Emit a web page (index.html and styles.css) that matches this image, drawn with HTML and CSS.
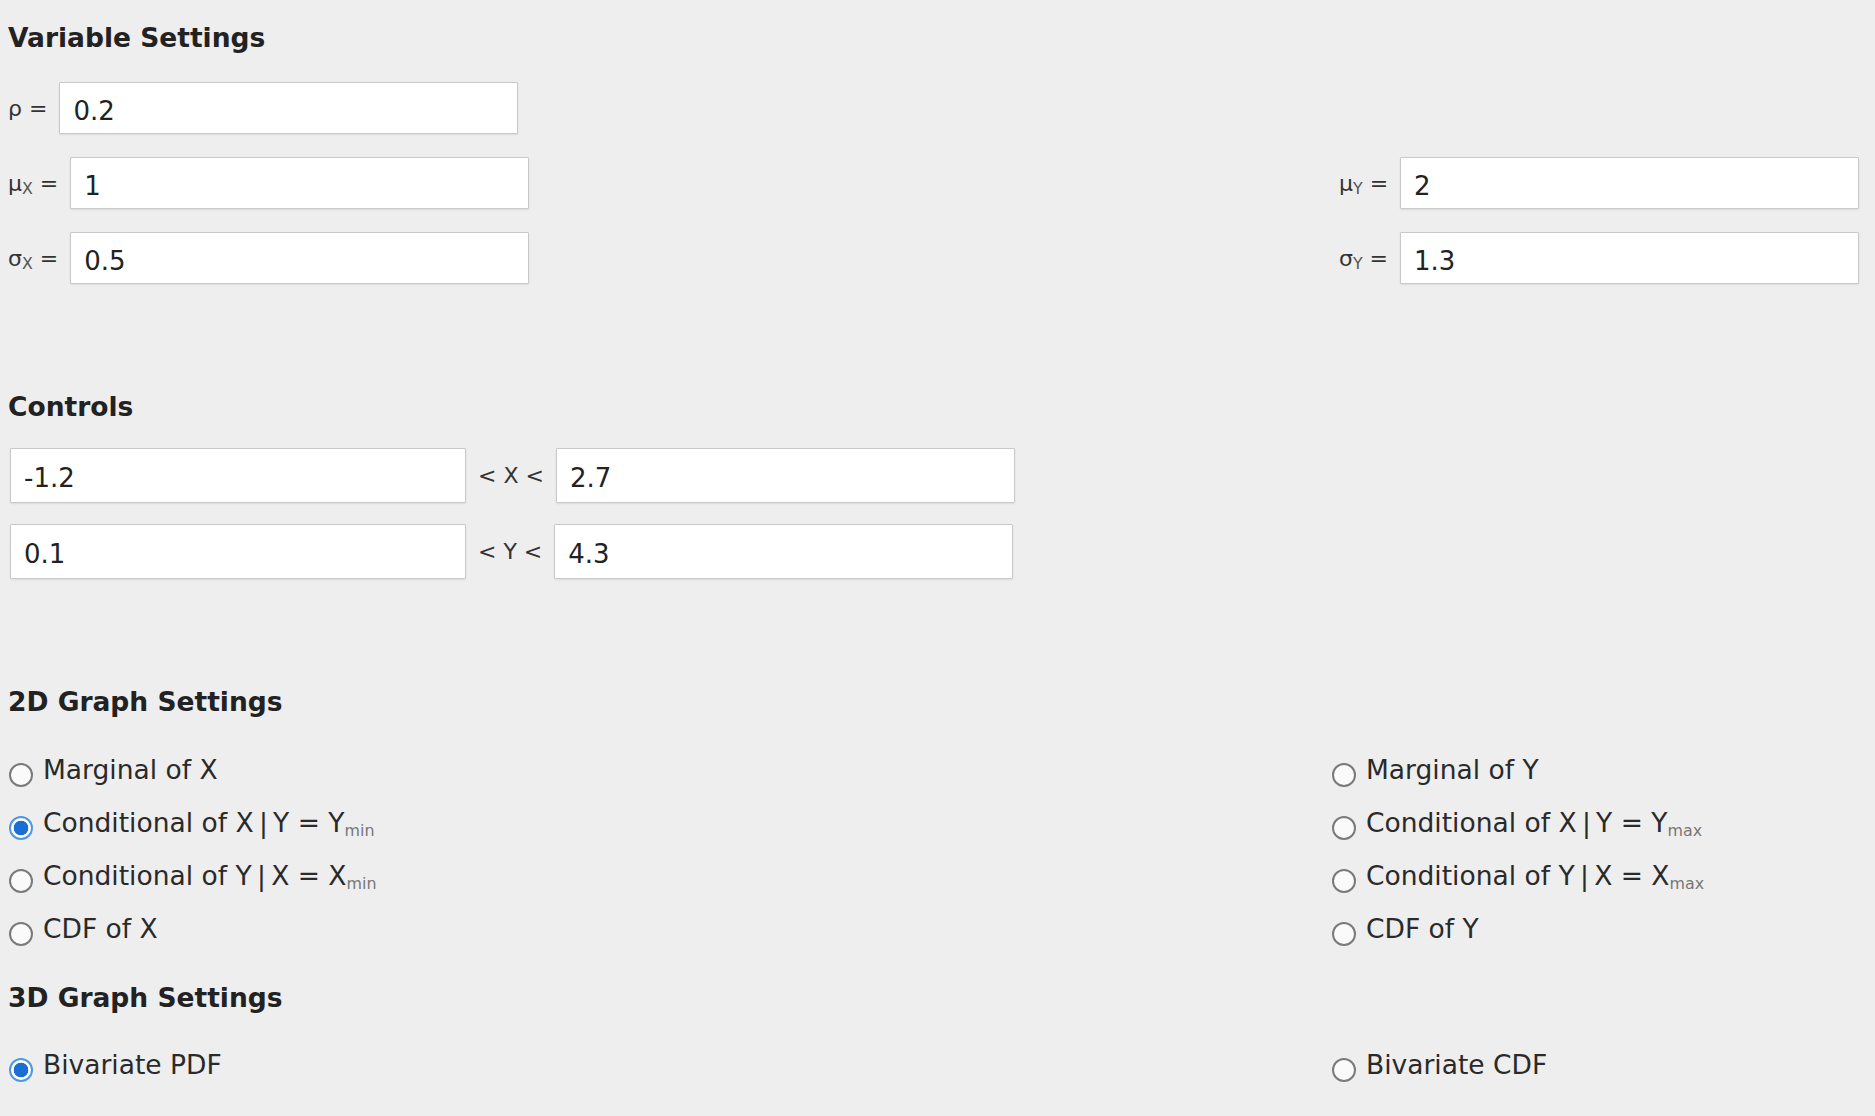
FILE: index.html
```html
<!DOCTYPE html>
<html>
<head>
  <meta charset="utf-8">
  <title>Bivariate Normal Distribution</title>
  <link rel="stylesheet" href="styles.css">
</head>
<body>
  <div class="section">
    <h2>Variable Settings</h2>
    <div class="var-grid">
      <div class="field">
        <label>&rho; =</label>
        <input type="text" value="0.2">
      </div>
      <div></div>
      <div class="field">
        <label>&mu;<sub>X</sub> =</label>
        <input type="text" value="1">
      </div>
      <div class="field">
        <label>&mu;<sub>Y</sub> =</label>
        <input type="text" value="2">
      </div>
      <div class="field">
        <label>&sigma;<sub>X</sub> =</label>
        <input type="text" value="0.5">
      </div>
      <div class="field">
        <label>&sigma;<sub>Y</sub> =</label>
        <input type="text" value="1.3">
      </div>
    </div>
  </div>

  <div class="section">
    <h2>Controls</h2>
    <div class="ranges">
      <div class="range-row">
        <input type="text" value="-1.2">
        <span class="range-label">&lt; X &lt;</span>
        <input type="text" value="2.7">
      </div>
      <div class="range-row">
        <input type="text" value="0.1">
        <span class="range-label">&lt; Y &lt;</span>
        <input type="text" value="4.3">
      </div>
    </div>
  </div>

  <div class="section">
    <h2>2D Graph Settings</h2>
    <div class="options">
      <div class="option-list">
        <label class="option"><input type="radio" name="graph2d"><span>Marginal of X</span></label>
        <label class="option"><input type="radio" name="graph2d" checked><span>Conditional of X&thinsp;|&thinsp;Y = Y<sub>min</sub></span></label>
        <label class="option"><input type="radio" name="graph2d"><span>Conditional of Y&thinsp;|&thinsp;X = X<sub>min</sub></span></label>
        <label class="option"><input type="radio" name="graph2d"><span>CDF of X</span></label>
      </div>
      <div class="option-list">
        <label class="option"><input type="radio" name="graph2d"><span>Marginal of Y</span></label>
        <label class="option"><input type="radio" name="graph2d"><span>Conditional of X&thinsp;|&thinsp;Y = Y<sub>max</sub></span></label>
        <label class="option"><input type="radio" name="graph2d"><span>Conditional of Y&thinsp;|&thinsp;X = X<sub>max</sub></span></label>
        <label class="option"><input type="radio" name="graph2d"><span>CDF of Y</span></label>
      </div>
    </div>
  </div>

  <div class="section tight">
    <h2>3D Graph Settings</h2>
    <div class="options">
      <div class="option-list">
        <label class="option"><input type="radio" name="graph3d" checked><span>Bivariate PDF</span></label>
      </div>
      <div class="option-list">
        <label class="option"><input type="radio" name="graph3d"><span>Bivariate CDF</span></label>
      </div>
    </div>
  </div>
</body>
</html>
```

FILE: styles.css
```css
body {
  margin: 0;
  padding: 0 0 0 8px;
  font-family: "DejaVu Sans", Verdana, sans-serif;
  color: #222;
  background-color: #eeeeee;
}
h2 {
  margin: 0;
  font-size: 26.5px;
  font-weight: bold;
  line-height: 32px;
  color: #222;
}
.section:first-child {
  padding-top: 22px;
}
.section + .section {
  margin-top: 107px;
}
.section.tight {
  margin-top: 27px;
}
input[type="text"] {
  box-sizing: border-box;
  width: 459px;
  height: 52px;
  margin: 0;
  padding: 5px 13px 0;
  font-family: "DejaVu Sans", Verdana, sans-serif;
  font-size: 26px;
  color: #222;
  background-color: #fff;
  border: 1px solid #c9c9c9;
  border-radius: 1px;
  box-shadow: 0 1px 2px rgba(0,0,0,0.08);
  outline: none;
}
.var-grid {
  display: grid;
  grid-template-columns: 1331px 1fr;
  grid-auto-rows: 52px;
  row-gap: 23px;
  margin-top: 28px;
}
.field {
  display: flex;
  align-items: center;
  gap: 12px;
}
.field label {
  font-size: 22px;
  color: #333;
  white-space: nowrap;
}
.field sub {
  font-size: 0.72em;
  vertical-align: -0.2em;
  line-height: 0;
  color: #555;
}
.ranges {
  display: flex;
  flex-direction: column;
  gap: 21px;
  margin-top: 25px;
  padding-left: 2px;
}
.range-row {
  display: flex;
  align-items: center;
  gap: 12px;
}
.range-row input[type="text"] {
  height: 55px;
}
.range-row input[type="text"]:first-child {
  width: 456px;
}
.range-label {
  font-size: 22px;
  color: #333;
  white-space: nowrap;
}
.options {
  display: grid;
  grid-template-columns: 1323px 1fr;
  margin-top: 25px;
}
.section.tight .options {
  margin-top: 24px;
}
.option {
  display: flex;
  align-items: flex-start;
  height: 53px;
  line-height: 53px;
  font-size: 26.5px;
  color: #2a2a2a;
  white-space: nowrap;
}
.option sub {
  font-size: 0.6em;
  line-height: 0;
  vertical-align: -0.25em;
  color: #777;
}
input[type="radio"] {
  appearance: none;
  -webkit-appearance: none;
  box-sizing: border-box;
  flex: none;
  width: 24px;
  height: 24px;
  margin: 20px 10px 0 1px;
  border: 2px solid #7a7a7a;
  border-radius: 50%;
  background-color: #fafafa;
}
input[type="radio"]:checked {
  border-color: #4c98e4;
  background: radial-gradient(circle closest-side, #1b6fd4 0 70%, #ffffff 76% 100%);
}
```
